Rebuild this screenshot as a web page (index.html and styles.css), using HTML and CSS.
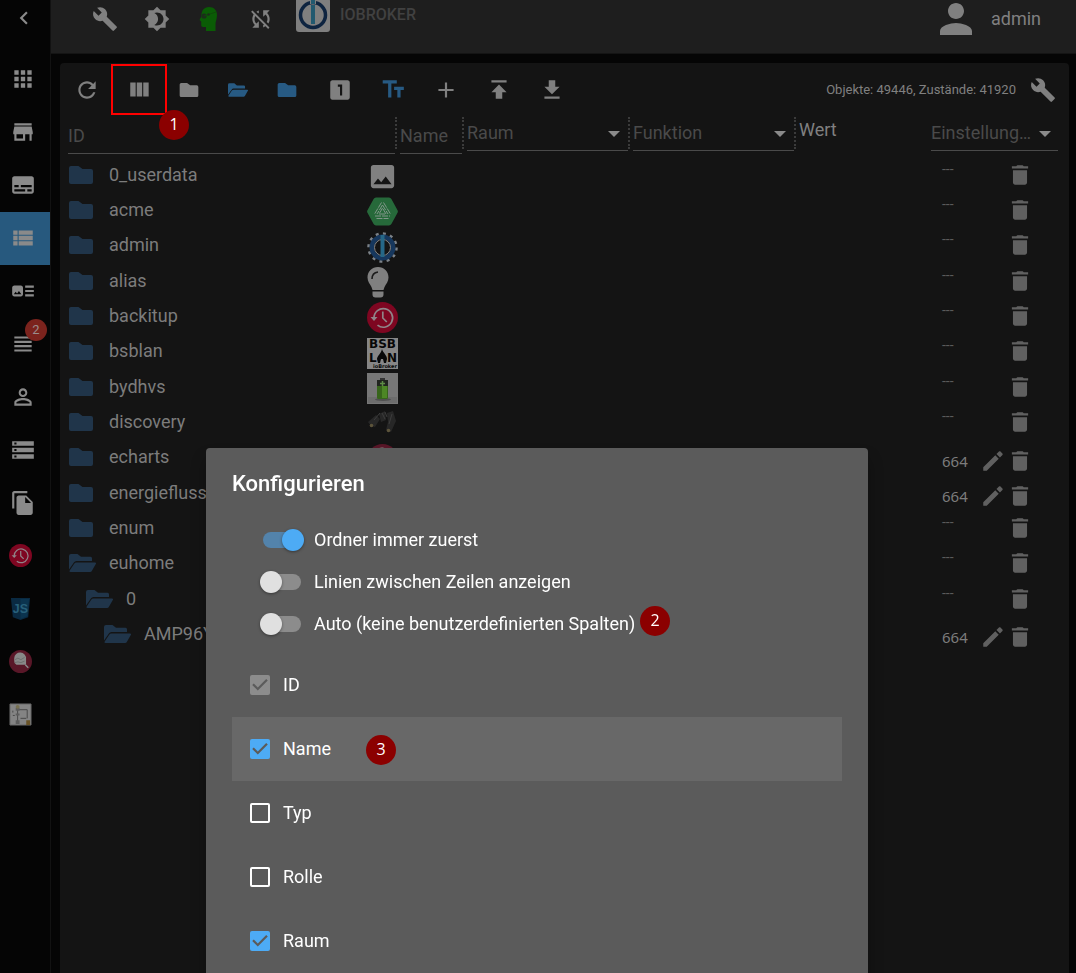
FILE: index.html
```html
<!DOCTYPE html>
<html lang="de">
<head>
    <meta charset="UTF-8">
    <meta name="viewport" content="width=device-width, initial-scale=1.0">
    <title>Objekte - ioBroker</title>
    <link rel="stylesheet" href="styles.css">
</head>
<body>

    <!-- Icons -->
    <svg class="sprite" aria-hidden="true">
        <symbol id="left" viewBox="0 0 24 24"><path d="M15.41 7.41L14 6l-6 6 6 6 1.41-1.41L10.83 12z"/></symbol>
        <symbol id="apps" viewBox="0 0 24 24"><path d="M4 8h4V4H4v4zm6 12h4v-4h-4v4zm-6 0h4v-4H4v4zm0-6h4v-4H4v4zm6 0h4v-4h-4v4zm6-10v4h4V4h-4zm-6 4h4V4h-4v4zm6 6h4v-4h-4v4zm0 6h4v-4h-4v4z"/></symbol>
        <symbol id="store" viewBox="0 0 24 24"><path d="M20 4H4v2h16V4zm1 10v-2l-1-5H4l-1 5v2h1v6h10v-6h4v6h2v-6h1zm-9 4H6v-4h6v4z"/></symbol>
        <symbol id="subtitles" viewBox="0 0 24 24"><path d="M20 4H4c-1.1 0-2 .9-2 2v12c0 1.1.9 2 2 2h16c1.1 0 2-.9 2-2V6c0-1.1-.9-2-2-2zM4 12h4v2H4v-2zm10 6H4v-2h10v2zm6 0h-4v-2h4v2zm0-4H10v-2h10v2z"/></symbol>
        <symbol id="viewlist" viewBox="0 0 24 24"><path d="M3 14h4v-4H3v4zm0 5h4v-4H3v4zM3 9h4V5H3v4zm5 5h13v-4H8v4zm0 5h13v-4H8v4zM8 5v4h13V5H8z"/></symbol>
        <symbol id="arttrack" viewBox="0 0 24 24"><path d="M22 13h-8v-2h8v2zm0-6h-8v2h8V7zm-8 10h8v-2h-8v2zm-2-8v6c0 1.1-.9 2-2 2H4c-1.1 0-2-.9-2-2V9c0-1.1.9-2 2-2h6c1.1 0 2 .9 2 2zm-1.5 6l-2.25-3-1.75 2.26-1.25-1.51L3.5 15h7z"/></symbol>
        <symbol id="headline" viewBox="0 0 24 24"><path d="M4 15h16v-2H4v2zm0 4h16v-2H4v2zm0-8h16V9H4v2zm0-6v2h16V5H4z"/></symbol>
        <symbol id="personline" viewBox="0 0 24 24"><path d="M12 5.9c1.16 0 2.1.94 2.1 2.1s-.94 2.1-2.1 2.1S9.9 9.16 9.9 8s.94-2.1 2.1-2.1m0 9c2.97 0 6.1 1.46 6.1 2.1v1.1H5.9V17c0-.64 3.13-2.1 6.1-2.1M12 4C9.79 4 8 5.79 8 8s1.79 4 4 4 4-1.79 4-4-1.79-4-4-4zm0 9c-2.67 0-8 1.34-8 4v3h16v-3c0-2.66-5.33-4-8-4z"/></symbol>
        <symbol id="storage" viewBox="0 0 24 24"><path d="M2 20h20v-4H2v4zm2-3h2v2H4v-2zM2 4v4h20V4H2zm4 3H4V5h2v2zm-4 7h20v-4H2v4zm2-3h2v2H4v-2z"/></symbol>
        <symbol id="filecopy" viewBox="0 0 24 24"><path d="M16 1H4c-1.1 0-2 .9-2 2v14h2V3h12V1zm-1 4l6 6v10c0 1.1-.9 2-2 2H7.99C6.89 23 6 22.1 6 21l.01-14c0-1.1.89-2 1.99-2h7zm-1 7h5.5L14 6.5V12z"/></symbol>
        <symbol id="wrench" viewBox="0 0 24 24"><path d="M22.7 19l-9.1-9.1c.9-2.3.4-5-1.5-6.9-2-2-5-2.4-7.4-1.3L9 6 6 9 1.6 4.7C.4 7.1.9 10.1 2.9 12.1c1.9 1.9 4.6 2.4 6.9 1.5l9.1 9.1c.4.4 1 .4 1.4 0l2.3-2.3c.5-.4.5-1.1.1-1.4z"/></symbol>
        <symbol id="brightness" viewBox="0 0 24 24"><path d="M20 8.69V4h-4.69L12 .69 8.69 4H4v4.69L.69 12 4 15.31V20h4.69L12 23.31 15.31 20H20v-4.69L23.31 12 20 8.69zM12 18c-.89 0-1.74-.2-2.5-.55C11.56 16.5 13 14.42 13 12s-1.44-4.5-3.5-5.45C10.26 6.2 11.11 6 12 6c3.31 0 6 2.69 6 6s-2.69 6-6 6z"/></symbol>
        <symbol id="expert" viewBox="0 0 24 26"><path fill="#0a5c05" d="M12 1c5 0 8 3.400 8 8 0 4-1.500 6-1.500 9v7H9v-4H6c-1.200 0-1.800-.8-1.800-2v-3.500L2.500 14l1.800-3.500C4.300 4.500 7 1 12 1z"/><circle cx="7" cy="10" r="2.600" fill="#1b2d1a"/><path d="M7 10l12-4" stroke="#0d4a08"/><circle cx="11.500" cy="8.500" r="1.300" fill="#1b2d1a"/></symbol>
        <symbol id="syncoff" viewBox="0 0 24 24"><path d="M10 6.35V4.26c-.8.21-1.55.54-2.23.96l1.46 1.46c.25-.12.5-.24.77-.33zm-7.14-.94l2.36 2.36C4.45 8.99 4 10.44 4 12c0 2.21.91 4.2 2.36 5.64L4 20h6v-6l-2.24 2.24C6.68 15.15 6 13.66 6 12c0-1 .25-1.94.68-2.77l8.08 8.08c-.25.13-.5.25-.77.34v2.090c.8-.21 1.55-.54 2.23-.96l2.36 2.36 1.27-1.27L4.14 4.14 2.86 5.41zM20 4h-6v6l2.24-2.24C17.32 8.85 18 10.34 18 12c0 1-.25 1.94-.68 2.77l1.46 1.46C19.55 15.01 20 13.56 20 12c0-2.21-.91-4.2-2.36-5.64L20 4z"/></symbol>
        <symbol id="logo" viewBox="0 0 34 34"><rect width="34" height="34" rx="3" fill="#7f7f7f"/><circle cx="17" cy="17" r="12.500" fill="none" stroke="#0e2440" stroke-width="3.500"/><path d="M14 0h6v6h-6z" fill="#7f7f7f"/><path d="M15 2h4v4h-4zM15 7h4v19h-4z" fill="#21596f"/></symbol>
        <symbol id="person" viewBox="0 0 24 24"><path d="M12 12c2.21 0 4-1.79 4-4s-1.79-4-4-4-4 1.79-4 4 1.79 4 4 4zm0 2c-2.67 0-8 1.34-8 4v2h16v-2c0-2.66-5.33-4-8-4z"/></symbol>
        <symbol id="refresh" viewBox="0 0 24 24"><path d="M17.65 6.35C16.2 4.9 14.21 4 12 4c-4.42 0-7.990 3.58-7.990 8s3.57 8 7.990 8c3.73 0 6.84-2.550 7.73-6h-2.080c-.82 2.33-3.040 4-5.650 4-3.310 0-6-2.690-6-6s2.690-6 6-6c1.660 0 3.140.69 4.220 1.780L13 11h7V4l-2.350 2.350z"/></symbol>
        <symbol id="columns" viewBox="0 0 24 24"><path d="M9 18h5V5H9v13zm-6 0h5V5H3v13zM15 5v13h5V5h-5z"/></symbol>
        <symbol id="folder" viewBox="0 0 24 18"><path d="M2 0h7.500l4 3H22a2 2 0 0 1 2 2v11a2 2 0 0 1-2 2H2a2 2 0 0 1-2-2V2a2 2 0 0 1 2-2z"/></symbol>
        <symbol id="open" viewBox="0 0 27 18"><path d="M2 0h6.500l3.500 2.800h9.500a1.500 1.500 0 0 1 1.500 1.500V7H7.500a3 3 0 0 0-2.600 1.500L0 15.500V2a2 2 0 0 1 2-2zM7.500 8.500H26a1 1 0 0 1 .8 1.500l-4 7a2 2 0 0 1-1.800 1H1.500a1 1 0 0 1-.8-1.500l4.500-6.800a2.800 2.800 0 0 1 2.300-1.200z"/></symbol>
        <symbol id="one" viewBox="0 0 24 24"><path d="M19 3H5c-1.100 0-2 .9-2 2v14c0 1.100.9 2 2 2h14c1.100 0 2-.9 2-2V5c0-1.100-.9-2-2-2zm-5 14h-2V9h-2V7h4v10z"/></symbol>
        <symbol id="textsize" viewBox="0 0 24 24"><path d="M2.500 3v3h5v13h3V6h5V3h-13zM22 9h-9v3h3v7h3v-7h3V9z"/></symbol>
        <symbol id="add" viewBox="0 0 24 24"><path d="M19 13h-6v6h-2v-6H5v-2h6V5h2v6h6v2z"/></symbol>
        <symbol id="upload" viewBox="0 0 24 24"><path d="M5 3v2h14V3H5zm0 11h4v6h6v-6h4l-7-7-7 7z"/></symbol>
        <symbol id="download" viewBox="0 0 24 24"><path d="M19 9h-4V3H9v6H5l7 7 7-7zM5 18v2h14v-2H5z"/></symbol>
        <symbol id="trash" viewBox="0 0 24 24"><path d="M5.500 19c0 1.100.9 2 2 2h9c1.100 0 2-.9 2-2V7.500h-13V19zM19.500 4h-4l-1-1h-5l-1 1h-4v2h15V4z"/></symbol>
        <symbol id="edit" viewBox="0 0 24 24"><path d="M3 17.800V21h3.200L17.300 9.900l-3.200-3.200L3 17.800zM20.700 6.500c.4-.4.4-1 0-1.400l-1.800-1.800c-.4-.4-1-.4-1.400 0l-2.300 2.300 3.200 3.200 2.300-2.300z"/></symbol>
        <symbol id="image" viewBox="0 0 24 24"><path d="M21 19V5c0-1.100-.9-2-2-2H5c-1.100 0-2 .9-2 2v14c0 1.100.9 2 2 2h14c1.100 0 2-.9 2-2zM5 18l3.500-4.500 2.500 3 3.500-4.500L19 18H5z"/></symbol>
        <symbol id="acme" viewBox="0 0 31 31"><path d="M9 1.500h13a3 3 0 0 1 2.400 1.400l6 11a3 3 0 0 1 0 3.200l-6 11a3 3 0 0 1-2.400 1.400H9a3 3 0 0 1-2.400-1.400l-6-11a3 3 0 0 1 0-3.200l6-11A3 3 0 0 1 9 1.500z" fill="#26693a"/><path d="M15.500 12L12 18h7zM14.500 6.500L7.500 18M16.500 6.500L23.500 18M15.500 9L10 18M15.500 9l5.500 9M8 20h15M9.500 22.500h12" fill="none" stroke="#819689" stroke-dasharray="6 1"/></symbol>
        <symbol id="gear" viewBox="0 0 31 31"><circle cx="15.500" cy="15.500" r="14" fill="none" stroke="#7c8288" stroke-width="2.500" stroke-dasharray="3 4.330"/><circle cx="15.500" cy="15.500" r="10.700" fill="#141414" stroke="#16375d" stroke-width="4.500"/><circle cx="15.500" cy="15.500" r="8" fill="none" stroke="#858585"/><path d="M13.500 3h4v22h-4z" fill="#256787"/></symbol>
        <symbol id="bulb" viewBox="0 0 31 31"><path d="M11 0c6 0 10.500 4.500 10.500 10.500 0 4-2.500 6.500-4 9.500L16.500 23h-11l-1-3C3 17 .5 14.500.5 10.500.5 4.500 5 0 11 0zM5.500 24.500h11v3a3 3 0 0 1-3 3h-5a3 3 0 0 1-3-3z"/><path d="M5 12c0-4 2-6.500 6-7" stroke="#1c1c1c" stroke-width="1.600" fill="none"/></symbol>
        <symbol id="backitup" viewBox="0 0 31 31"><circle cx="15.500" cy="15.500" r="15.500" fill="#7e0621"/><path d="M7 16a9.300 9.300 0 1 1 3.500 7.200M15.800 9.500V16l4 4" fill="none" stroke="#908488" stroke-width="1.700"/><path d="M3.500 15h7L7 19z" fill="#908488"/></symbol>
        <symbol id="battery" viewBox="0 0 31 31"><path d="M0 0h31v31H0z" fill="#777"/><path d="M1 24h29v6H1z" fill="#6d6d6d"/><ellipse cx="16" cy="26.500" rx="8" ry="1.500" fill="#505050"/><path d="M13 5h5v3h-5z" fill="#333"/><rect x="10" y="7" width="11" height="19" rx="1.500" fill="#37651b"/><path d="M10 7h11v6H10z" fill="#20241e"/><path d="M15 13h5v12h-5z" fill="#4d8725"/><path d="M15.500 8v5M13 10.500h5" stroke="#5d8c46" stroke-width="1.500"/></symbol>
        <symbol id="binocular" viewBox="0 0 31 31"><path d="M1 14l8-7 4 4-5 8-4-1zM12 6l6-3 1 9-5 2zM20 5l6-2 3 10-5 11-5-2 2-8z" fill="#272727"/><path d="M7 12l6-7M15 5l3 6M18 4l2 5M25 6l-3 10" stroke="#3d3d3d"/><circle cx="4.500" cy="17.500" r="1.800" fill="#5c543b"/><circle cx="21.500" cy="22.500" r="1.800" fill="#5c543b"/></symbol>
        <symbol id="echarts" viewBox="0 0 31 31"><circle cx="15.500" cy="15.500" r="15.500" fill="#591728"/><path d="M7 11a8 8 0 0 1 16 1v8H10a6 6 0 0 1-3-6z" fill="#888"/><path d="M8 13l4-2 4 2 5-3M8 17l4-1 4 1 5-2" fill="none" stroke="#666"/><path d="M22 20l4 4" stroke="#888" stroke-width="2"/></symbol>
        <symbol id="flow" viewBox="0 0 24 24"><path d="M1 1h22v22H1z" fill="#848484" stroke="#666"/><path d="M9 5v14M9 7h10v9M12 16h6M4 8v2M4 13h2" fill="none" stroke="#474747"/><path d="M7 5h4v3H7zM7 11h4v2H7zM7 18h4v4H7z" fill="#5d5d5d"/><path d="M18 18h4v5h-4z" fill="#695327"/><circle cx="9" cy="4" r="2" fill="#77704f"/></symbol>
    </svg>

    <div class="layout">
        <!-- Menü links -->
        <nav class="sidebar">
            <button class="collapse" aria-label="Menü schließen"><svg><use href="#left"/></svg></button>
            <a href="#" aria-label="Übersicht"><svg><use href="#apps"/></svg></a>
            <a href="#" aria-label="Adapter"><svg><use href="#store"/></svg></a>
            <a href="#" aria-label="Instanzen"><svg><use href="#subtitles"/></svg></a>
            <a href="#" class="active" aria-label="Objekte"><svg><use href="#viewlist"/></svg></a>
            <a href="#" aria-label="Aufzählungen"><svg><use href="#arttrack"/></svg></a>
            <a href="#" aria-label="Protokolle"><svg><use href="#headline"/></svg><span class="count">2</span></a>
            <a href="#" aria-label="Benutzer"><svg><use href="#personline"/></svg></a>
            <a href="#" aria-label="Hosts"><svg><use href="#storage"/></svg></a>
            <a href="#" aria-label="Dateien"><svg><use href="#filecopy"/></svg></a>
            <a href="#" class="adapter" aria-label="Backup"><svg><use href="#backitup"/></svg></a>
            <a href="#" class="adapter" aria-label="Skripte">
                <svg viewBox="0 0 24 24"><path d="M2 1h20l-2 20-8 3-8-3z" fill="#0a2a42"/><path d="M12 2h9l-2 18-7 3z" fill="#0b344f"/><text class="js-text" x="4" y="17">JS</text></svg>
            </a>
            <a href="#" class="adapter" aria-label="Diagramme"><svg><use href="#echarts"/></svg></a>
            <a href="#" class="adapter" aria-label="Energiefluss"><svg><use href="#flow"/></svg></a>
        </nav>

        <div class="content">
            <header class="appbar">
                <button aria-label="Einstellungen"><svg><use href="#wrench"/></svg></button>
                <button aria-label="Farbschema"><svg><use href="#brightness"/></svg></button>
                <button aria-label="Expertenmodus"><svg><use href="#expert"/></svg></button>
                <button aria-label="Synchronisierung"><svg><use href="#syncoff"/></svg></button>
                <a href="#" class="brand"><svg><use href="#logo"/></svg>IOBROKER</a>
                <div class="user"><svg><use href="#person"/></svg>admin</div>
            </header>

            <main class="panel">
                <div class="toolbar">
                    <button aria-label="Aktualisieren"><svg><use href="#refresh"/></svg></button>
                    <div class="marked">
                        <button aria-label="Spalten konfigurieren"><svg><use href="#columns"/></svg></button>
                        <span class="frame"></span>
                        <span class="marker marker-1">1</span>
                    </div>
                    <div class="folders">
                        <button aria-label="Alle schließen"><svg><use href="#folder"/></svg></button>
                        <button class="blue" aria-label="Alle öffnen"><svg><use href="#open"/></svg></button>
                        <button class="blue" aria-label="Eine Ebene schließen"><svg><use href="#folder"/></svg></button>
                    </div>
                    <button aria-label="Eine Ebene"><svg><use href="#one"/></svg></button>
                    <button class="blue" aria-label="Beschreibung"><svg><use href="#textsize"/></svg></button>
                    <button aria-label="Hinzufügen"><svg><use href="#add"/></svg></button>
                    <button aria-label="Hochladen"><svg><use href="#upload"/></svg></button>
                    <button aria-label="Herunterladen"><svg><use href="#download"/></svg></button>
                    <span class="stats">Objekte: 49446, Zustände: 41920</span>
                    <button class="edit-all" aria-label="Bearbeiten"><svg><use href="#wrench"/></svg></button>
                </div>

                <table class="objects">
                    <colgroup>
                        <col class="col-id"><col class="col-name"><col class="col-room"><col class="col-room"><col><col class="col-settings">
                    </colgroup>
                    <thead>
                        <tr>
                            <th><div class="filter sep"><input type="text" placeholder="ID" aria-label="ID"></div></th>
                            <th><div class="filter sep"><input type="text" placeholder="Name" aria-label="Name"></div></th>
                            <th><div class="filter sep drop"><select aria-label="Raum"><option>Raum</option></select></div></th>
                            <th><div class="filter sep drop"><select aria-label="Funktion"><option>Funktion</option></select></div></th>
                            <th class="value">Wert</th>
                            <th><div class="filter drop"><select aria-label="Einstellungen"><option>Einstellung…</option></select></div></th>
                        </tr>
                    </thead>
                    <tbody>
                        <tr><td><div class="id"><svg class="folder"><use href="#folder"/></svg>0_userdata<svg class="pic"><use href="#image"/></svg></div></td><td></td><td></td><td></td><td></td><td><div class="actions"><span class="none">---</span><button aria-label="Löschen"><svg><use href="#trash"/></svg></button></div></td></tr>
                        <tr><td><div class="id"><svg class="folder"><use href="#folder"/></svg>acme<svg class="pic"><use href="#acme"/></svg></div></td><td></td><td></td><td></td><td></td><td><div class="actions"><span class="none">---</span><button aria-label="Löschen"><svg><use href="#trash"/></svg></button></div></td></tr>
                        <tr><td><div class="id"><svg class="folder"><use href="#folder"/></svg>admin<svg class="pic"><use href="#gear"/></svg></div></td><td></td><td></td><td></td><td></td><td><div class="actions"><span class="none">---</span><button aria-label="Löschen"><svg><use href="#trash"/></svg></button></div></td></tr>
                        <tr><td><div class="id"><svg class="folder"><use href="#folder"/></svg>alias<svg class="pic"><use href="#bulb"/></svg></div></td><td></td><td></td><td></td><td></td><td><div class="actions"><span class="none">---</span><button aria-label="Löschen"><svg><use href="#trash"/></svg></button></div></td></tr>
                        <tr><td><div class="id"><svg class="folder"><use href="#folder"/></svg>backitup<svg class="pic"><use href="#backitup"/></svg></div></td><td></td><td></td><td></td><td></td><td><div class="actions"><span class="none">---</span><button aria-label="Löschen"><svg><use href="#trash"/></svg></button></div></td></tr>
                        <tr><td><div class="id"><svg class="folder"><use href="#folder"/></svg>bsblan<svg class="pic bsb" viewBox="0 0 31 31"><path d="M0 0h31v31H0z" fill="#868686"/><text x="2" y="10">BSB</text><text x="2" y="24">L</text><text x="20" y="24">N</text><text class="small" x="6" y="30">ioBroker</text><path d="M15 11c1 4 5 6 5 10l-1 4h-2l-1-4h-2l-1 4h-2l-1-4c0-3 4-5 5-10z" fill="#080808"/></svg></div></td><td></td><td></td><td></td><td></td><td><div class="actions"><span class="none">---</span><button aria-label="Löschen"><svg><use href="#trash"/></svg></button></div></td></tr>
                        <tr><td><div class="id"><svg class="folder"><use href="#folder"/></svg>bydhvs<svg class="pic"><use href="#battery"/></svg></div></td><td></td><td></td><td></td><td></td><td><div class="actions"><span class="none">---</span><button aria-label="Löschen"><svg><use href="#trash"/></svg></button></div></td></tr>
                        <tr><td><div class="id"><svg class="folder"><use href="#folder"/></svg>discovery<svg class="pic"><use href="#binocular"/></svg></div></td><td></td><td></td><td></td><td></td><td><div class="actions"><span class="none">---</span><button aria-label="Löschen"><svg><use href="#trash"/></svg></button></div></td></tr>
                        <tr><td><div class="id"><svg class="folder"><use href="#folder"/></svg>echarts<svg class="pic"><use href="#echarts"/></svg></div></td><td></td><td></td><td></td><td></td><td><div class="actions rights"><span>664</span><button aria-label="Bearbeiten"><svg><use href="#edit"/></svg></button><button aria-label="Löschen"><svg><use href="#trash"/></svg></button></div></td></tr>
                        <tr><td><div class="id"><svg class="folder"><use href="#folder"/></svg>energiefluss</div></td><td></td><td></td><td></td><td></td><td><div class="actions rights"><span>664</span><button aria-label="Bearbeiten"><svg><use href="#edit"/></svg></button><button aria-label="Löschen"><svg><use href="#trash"/></svg></button></div></td></tr>
                        <tr><td><div class="id"><svg class="folder"><use href="#folder"/></svg>enum</div></td><td></td><td></td><td></td><td></td><td><div class="actions"><span class="none">---</span><button aria-label="Löschen"><svg><use href="#trash"/></svg></button></div></td></tr>
                        <tr><td><div class="id"><svg class="folder open"><use href="#open"/></svg>euhome</div></td><td></td><td></td><td></td><td></td><td><div class="actions"><span class="none">---</span><button aria-label="Löschen"><svg><use href="#trash"/></svg></button></div></td></tr>
                        <tr><td><div class="id level-1"><svg class="folder open"><use href="#open"/></svg>0</div></td><td></td><td></td><td></td><td></td><td><div class="actions"><span class="none">---</span><button aria-label="Löschen"><svg><use href="#trash"/></svg></button></div></td></tr>
                        <tr><td><div class="id level-2"><svg class="folder open"><use href="#open"/></svg>AMP96Y</div></td><td></td><td></td><td></td><td></td><td><div class="actions rights"><span>664</span><button aria-label="Bearbeiten"><svg><use href="#edit"/></svg></button><button aria-label="Löschen"><svg><use href="#trash"/></svg></button></div></td></tr>
                    </tbody>
                </table>
            </main>
        </div>
    </div>

    <!-- Dialog Spalten -->
    <div class="overlay">
        <div class="dialog" role="dialog" aria-labelledby="dialog-title">
            <h2 id="dialog-title">Konfigurieren</h2>
            <div class="switches">
                <label><input type="checkbox" class="switch" checked>Ordner immer zuerst</label>
                <label><input type="checkbox" class="switch">Linien zwischen Zeilen anzeigen</label>
                <label><input type="checkbox" class="switch">Auto (keine benutzerdefinierten Spalten)<span class="marker marker-2">2</span></label>
            </div>
            <div class="columns">
                <label><input type="checkbox" class="check" checked disabled>ID</label>
                <label class="hover"><input type="checkbox" class="check" checked>Name<span class="marker marker-3">3</span></label>
                <label><input type="checkbox" class="check">Typ</label>
                <label><input type="checkbox" class="check">Rolle</label>
                <label><input type="checkbox" class="check" checked>Raum</label>
            </div>
        </div>
    </div>

</body>
</html>
```
FILE: styles.css
```css
* {
    box-sizing: border-box;
}
body {
    margin: 0;
    height: 100vh;
    overflow: hidden;
    background: #050505;
    color: #808080;
    font-family: Roboto, sans-serif;
    font-size: 18px;
    line-height: 24px;
}
button {
    padding: 0;
    border: none;
    background: none;
    color: inherit;
    display: flex;
    align-items: center;
    justify-content: center;
    cursor: pointer;
}
svg {
    width: 26px;
    height: 26px;
    fill: currentColor;
    flex-shrink: 0;
}
a {
    color: inherit;
    text-decoration: none;
}
.sprite {
    position: absolute;
    width: 0;
    height: 0;
}
.layout {
    display: flex;
    height: 100%;
}

/* Menü */
.sidebar {
    width: 51px;
    flex-shrink: 0;
    border-right: 1px solid #121212;
    color: #8a8a8a;
}
.sidebar a {
    display: flex;
    align-items: center;
    height: 53px;
    padding: 0 0 2px 10px;
    position: relative;
}
.sidebar .collapse {
    width: 48px;
    height: 53px;
    align-items: flex-start;
    padding-top: 5px;
}
.sidebar .active {
    background: #27597e;
}
.sidebar .adapter {
    padding-left: 9px;
}
.sidebar .adapter svg {
    width: 23px;
    height: 23px;
}
.js-text {
    fill: #28607a;
    font-family: "Liberation Sans", sans-serif;
    font-size: 13px;
    font-weight: bold;
}
.count {
    position: absolute;
    top: 1px;
    right: 3px;
    width: 22px;
    height: 22px;
    border-radius: 50%;
    background: #7b231d;
    color: #9a8d8c;
    font-size: 13px;
    line-height: 22px;
    text-align: center;
}

/* Kopfzeile */
.content {
    flex: 1;
    min-width: 0;
    display: flex;
    flex-direction: column;
}
.appbar {
    display: flex;
    align-items: flex-start;
    height: 54px;
    flex-shrink: 0;
    padding: 0 35px 0 28px;
    background: #1e1e1e;
    border-bottom: 1px solid #141414;
}
.appbar button {
    width: 52px;
    height: 37px;
}
.brand {
    display: flex;
    align-items: center;
    gap: 10px;
    height: 30px;
    margin-left: 9px;
    color: #414141;
    font-size: 16px;
    font-weight: 500;
}
.brand svg {
    width: 34px;
    height: 34px;
}
.user {
    display: flex;
    align-items: center;
    gap: 11px;
    height: 37px;
    margin-left: auto;
}
.user svg {
    width: 48px;
    height: 48px;
}

/* Objekte */
.panel {
    flex: 1;
    margin: 9px 7px 0 9px;
    padding: 0 11px 0 8px;
    background: #141414;
    border-radius: 4px 4px 0 0;
}
.toolbar {
    display: flex;
    align-items: center;
    height: 53px;
    margin: 0 -8px;
}
.toolbar button {
    width: 53px;
    height: 53px;
}
.toolbar .blue {
    color: #275a83;
}
.folders {
    display: flex;
    margin: 0 2px 0 -2px;
}
.folders button {
    width: 49px;
}
.folders svg {
    width: 20px;
    height: 14px;
}
.marked {
    position: relative;
}
.frame {
    position: absolute;
    top: 1px;
    left: -2px;
    width: 56px;
    height: 51px;
    border: 2px solid #f00;
}
.marker {
    position: absolute;
    width: 30px;
    height: 30px;
    border-radius: 50%;
    background: #8b0000;
    color: #fff;
    font-family: "Open Sans", sans-serif;
    font-size: 16px;
    line-height: 29px;
    text-align: center;
}
.marker-1 {
    top: 47px;
    left: 46px;
}
.stats {
    margin-left: auto;
    font-size: 13px;
}
.toolbar .edit-all {
    margin-right: -3px;
}

.objects {
    width: 100%;
    table-layout: fixed;
    border-collapse: collapse;
}
.col-id {
    width: 332px;
}
.col-name {
    width: 67px;
}
.col-room {
    width: 166px;
}
.col-settings {
    width: 127px;
}
.objects th {
    height: 41px;
    padding: 0;
    text-align: left;
    font-weight: 400;
    vertical-align: top;
}
.objects .value {
    padding-top: 2px;
}
.filter {
    position: relative;
    height: 38px;
}
.sep {
    margin-right: 3px;
    padding-right: 2px;
}
.sep::after {
    content: "";
    position: absolute;
    top: 1px;
    right: 0;
    height: 32px;
    border-right: 2px dotted #3b3b3b;
}
.filter input,
.filter select {
    display: block;
    width: 100%;
    height: 38px;
    padding: 2px 0 0;
    border: none;
    border-bottom: 1px solid #4a4a4a;
    border-radius: 0;
    outline: none;
    background: none;
    color: #4a4a4a;
    font: inherit;
}
.filter input::placeholder {
    color: #4a4a4a;
}
.filter select {
    appearance: none;
    height: 35px;
    padding: 0;
}
.drop::before {
    content: "";
    position: absolute;
    top: 15px;
    right: 7px;
    border: 6px solid transparent;
    border-top-color: #8a8a8a;
    border-bottom: none;
}
.drop.sep::before {
    right: 10px;
}
.objects td {
    height: 35px;
    padding: 0;
}
.objects tbody tr:nth-child(3n) td {
    height: 36px;
}
.id {
    display: flex;
    align-items: center;
    height: 35px;
    padding-left: 1px;
    color: #7c7c7c;
}
.level-1 {
    padding-left: 18px;
}
.level-2 {
    padding-left: 36px;
}
.folder {
    width: 24px;
    height: 18px;
    margin-right: 16px;
    color: #20354a;
}
.folder.open {
    width: 27px;
    margin-right: 13px;
}
.pic {
    width: 31px;
    height: 31px;
    margin: 4px 2px 0 auto;
    color: #808080;
}
.bsb text {
    fill: #080808;
    font-family: "DejaVu Sans", sans-serif;
    font-size: 12px;
    font-weight: bold;
}
.bsb .small {
    font-size: 5px;
}
.actions {
    display: flex;
    align-items: center;
    height: 35px;
    padding: 0 25px 0 11px;
    color: #606060;
}
.actions span {
    margin-right: auto;
    color: #7c7c7c;
    font-family: "Noto Sans", sans-serif;
    font-size: 15px;
}
.actions .none {
    margin-bottom: 12px;
    color: #5a5a5a;
    font-family: Roboto, sans-serif;
    font-size: 14px;
}
.actions button {
    width: 27px;
    height: 26px;
}
.actions.rights {
    padding-top: 7px;
}

/* Dialog */
.overlay {
    position: fixed;
    inset: 0;
    display: flex;
    justify-content: center;
    padding: 448px 2px 0 0;
}
.dialog {
    width: 662px;
    height: 100vh;
    padding: 23px 26px;
    background: #5b5b5b;
    border-radius: 4px;
    box-shadow: 0 11px 15px rgba(0, 0, 0, 0.3);
    color: #fff;
}
.dialog h2 {
    margin: 0;
    font-size: 22px;
    font-weight: 500;
    line-height: 26px;
}
.switches {
    margin-top: 22px;
    padding-left: 28px;
}
.switches label {
    display: flex;
    align-items: center;
    width: max-content;
    height: 42px;
    position: relative;
}
.switch {
    appearance: none;
    position: relative;
    width: 38px;
    height: 16px;
    margin: 0 13px 0 3px;
    border-radius: 8px;
    background: #8c8c8c;
}
.switch::before {
    content: "";
    position: absolute;
    top: -3px;
    left: -3px;
    width: 22px;
    height: 22px;
    border-radius: 50%;
    background: #e0e0e0;
    box-shadow: 0 1px 3px rgba(0, 0, 0, 0.4);
}
.switch:checked {
    background: #5383ab;
}
.switch:checked::before {
    left: 19px;
    background: #4dabf5;
}
.marker-2 {
    left: 380px;
    top: 3px;
}
.columns {
    margin-top: 8px;
}
.columns label {
    display: flex;
    align-items: center;
    height: 64px;
    padding-left: 18px;
    position: relative;
}
.columns .hover {
    background: #686868;
}
.check {
    appearance: none;
    width: 20px;
    height: 20px;
    margin: 0 13px 0 0;
    border: 2px solid #fff;
    border-radius: 2px;
}
.check:checked {
    border: none;
    background: #4dabf5;
}
.check:checked::before {
    content: "";
    display: block;
    width: 20px;
    height: 20px;
    background: #5b5b5b;
    clip-path: polygon(39% 78%, 11% 50%, 19% 42%, 39% 62%, 81% 20%, 89% 28%);
}
.check:disabled {
    background: #8c8c8c;
}
.marker-3 {
    left: 134px;
    top: 18px;
}
```
